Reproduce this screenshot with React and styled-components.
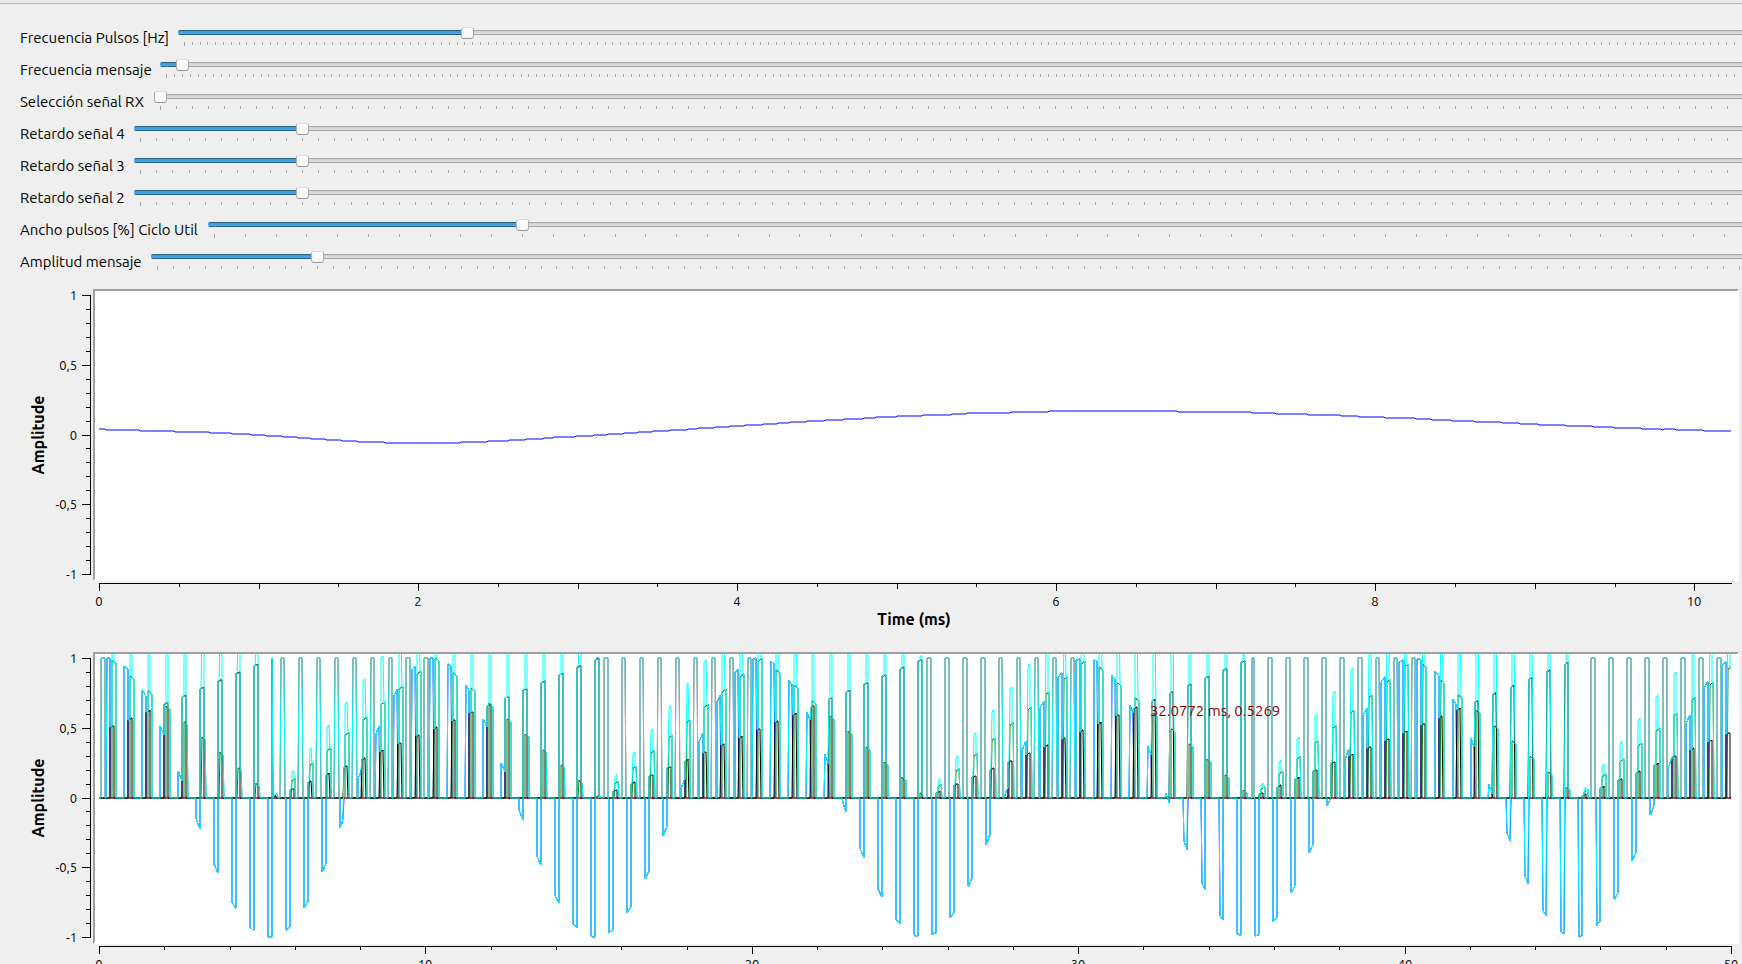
import React, { useLayoutEffect, useMemo, useRef, useState } from "react";
import styled, { createGlobalStyle } from "styled-components";

const GlobalStyle = createGlobalStyle`
  * { box-sizing: border-box; }
  html, body { margin: 0; height: 100%; overflow: hidden; background: #efefef; }
  body { font-family: Ubuntu, "Noto Sans", sans-serif; font-size: 15px; color: #000; }
`;

const Window = styled.main`
  height: 100vh;
  overflow: hidden;
  background: #efefef;
`;

const TopEdge = styled.div`
  height: 4px;
  background: #eaeaea;
  border-bottom: 1px solid #b8b8b8;
`;

const Controls = styled.form`
  margin: 18px -4px 0 20px;
`;

const ControlRow = styled.div`
  display: flex;
  gap: 8px;
  height: 32px;
`;

const ControlLabel = styled.label`
  flex: 0 0 ${(p) => p.$width}px;
  line-height: 32px;
  white-space: nowrap;
`;

const SliderBox = styled.div`
  flex: 1;
  min-width: 0;
  padding-top: 4px;
`;

const Slider = styled.input`
  display: block;
  appearance: none;
  width: 100%;
  height: 13px;
  margin: 0;
  background: transparent;
  outline: none;

  &::-webkit-slider-runnable-track {
    height: 5px;
    border-radius: 2px;
    background:
      linear-gradient(#25618a 0 1px, #3a97dc 1px, #4badec 4px, #25618a 4px) 0 0 / var(--fill) 100% no-repeat,
      linear-gradient(#a9a9a9 0 1px, #cfcfcf 1px, #dedede 4px, #a9a9a9 4px);
  }

  &::-webkit-slider-thumb {
    appearance: none;
    width: 13px;
    height: 12px;
    margin-top: -3px;
    border: 1px solid #b0b0b0;
    border-top-color: #dcdcdc;
    border-bottom-color: #989898;
    border-radius: 3px;
    background: linear-gradient(#ffffff, #f6f6f6);
  }
`;

const TickStrip = styled.svg`
  display: block;
  width: 100%;
  height: 4px;
  margin-top: 3px;
`;

const ChartSection = styled.section`
  display: grid;
  grid-template-columns: 93px minmax(0, 1fr);
  grid-template-rows: 292px 28px 18px;
  margin: 0 3px 25px 0;
`;

const Charts = styled.div`
  padding-top: 11px;
`;

const SideAxis = styled.svg`
  width: 93px;
  height: 292px;
`;

const Canvas = styled.div`
  position: relative;
  background: #fff;
  border: 2px solid #fff;
  border-top-color: #a0a0a0;
  border-left-color: #a0a0a0;
`;

const Trace = styled.svg`
  display: block;
  width: 100%;
  height: 288px;
`;

const BottomAxis = styled.svg`
  grid-column: 2;
  width: 100%;
  height: 28px;
  padding-left: 2px;
  overflow: visible;
`;

const AxisTitle = styled.div`
  grid-column: 2;
  padding-right: 4px;
  text-align: center;
  font-size: 16px;
  font-weight: 700;
  line-height: 20px;
`;

const Readout = styled.output`
  position: absolute;
  left: 64%;
  top: 47px;
  padding-left: 4px;
  font-size: 15px;
  line-height: 20px;
  white-space: nowrap;
  color: #8b0000;
`;

function useWidth() {
  const ref = useRef(null);
  const [width, setWidth] = useState(0);
  useLayoutEffect(() => {
    const measure = () => setWidth(Math.round(ref.current.getBoundingClientRect().width));
    measure();
    const observer = new ResizeObserver(measure);
    observer.observe(ref.current);
    return () => observer.disconnect();
  }, []);
  return [ref, width];
}

/* ---------- sliders ---------- */

const THUMB = 13;

const SLIDERS = [
  { id: "fp", label: "Frecuencia Pulsos [Hz]", width: 150, value: 0.182, ticks: 199.67 },
  { id: "fm", label: "Frecuencia mensaje", width: 132, value: 0.0102, ticks: 199.67 },
  { id: "rx", label: "Selección señal RX", width: 126, value: 0, ticks: 98.75 },
  { id: "r4", label: "Retardo señal 4", width: 106, value: 0.1014, ticks: 98.75 },
  { id: "r3", label: "Retardo señal 3", width: 106, value: 0.1014, ticks: 98.75 },
  { id: "r2", label: "Retardo señal 2", width: 106, value: 0.1014, ticks: 98.75 },
  { id: "an", label: "Ancho pulsos [%] Ciclo Util", width: 180, value: 0.2018, ticks: 49.5 },
  { id: "am", label: "Amplitud mensaje", width: 123, value: 0.1012, ticks: 99 },
];

function SliderControl({ id, label, width, value, ticks }) {
  const [current, setCurrent] = useState(value);
  const [ref, boxWidth] = useWidth();
  const travel = Math.max(0, boxWidth - THUMB);
  const marks = [];
  for (let k = 0; k <= ticks; k += 1) {
    const x = 6 + Math.round((k * travel) / ticks);
    marks.push(`M${x} 0h1v${k === 0 || k === ticks ? 4 : 3}h-1z`);
  }
  return (
    <ControlRow>
      <ControlLabel htmlFor={id} $width={width}>{label}</ControlLabel>
      <SliderBox ref={ref}>
        <Slider
          id={id}
          type="range"
          min="0"
          max="1"
          step="any"
          value={current}
          onChange={(e) => setCurrent(Number(e.target.value))}
          style={{ "--fill": `${current * travel}px` }}
        />
        <TickStrip aria-hidden="true">
          <path d={marks.join("")} fill="#a6a6a6" />
        </TickStrip>
      </SliderBox>
    </ControlRow>
  );
}

/* ---------- plot geometry ---------- */

const PAD_LEFT = 4;
const PAD_RIGHT = 6;
const yOf = (v) => Math.round(143.5 - 139.5 * v);

function VerticalAxis() {
  const ticks = [];
  for (let k = -10; k <= 10; k += 1) {
    const major = k % 5 === 0;
    ticks.push(`M${major ? 82 : 86} ${Math.round(145.5 - 13.95 * k)}h${major ? 9 : 5}v1h-${major ? 9 : 5}z`);
  }
  return (
    <SideAxis>
      <path d={`${ticks.join("")}M90 6h1v280h-1z`} fill="#000" />
      {["1", "0,5", "0", "-0,5", "-1"].map((text, i) => (
        <text key={text} x="77" y={11 + Math.round(i * 69.75)} textAnchor="end" fontSize="13">{text}</text>
      ))}
      <text transform="translate(44 146) rotate(-90)" textAnchor="middle" fontSize="16" fontWeight="700">Amplitude</text>
    </SideAxis>
  );
}

function HorizontalAxis({ width, max, tick, medium, major }) {
  const span = width - PAD_LEFT - PAD_RIGHT;
  const marks = [];
  const labels = [];
  for (let k = 0; k * tick <= max; k += 1) {
    const v = k * tick;
    const x = PAD_LEFT + Math.round((v / max) * span);
    const isMajor = v % major === 0;
    const len = isMajor ? 8 : v % medium === 0 ? 6 : 4;
    marks.push(`M${x} 2h1v${len}h-1z`);
    if (isMajor) labels.push(<text key={v} x={x} y="25" textAnchor="middle" fontSize="13">{v}</text>);
  }
  return (
    <BottomAxis>
      <path d={`M${PAD_LEFT} 2h${Math.max(0, span) + 1}v1h-${Math.max(0, span) + 1}z${marks.join("")}`} fill="#000" />
      {labels}
    </BottomAxis>
  );
}

function toPath(points) {
  let d = "";
  let last = "";
  for (const [x, y] of points) {
    const p = `${x} ${y}`;
    if (p !== last) d += (d ? "L" : "M") + p;
    last = p;
  }
  return d;
}

/* ---------- recovered message: level changes of one quantisation step ---------- */

const START_LEVEL = 6;
const FALLING_A = [6, 40, 75, 110, 132, 151, 166, 183, 198, 211, 226, 242, 258, 285];
const RISING = [
  361, 388, 409, 426, 444, 454, 476, 494, 508, 524, 538, 553, 570, 588, 598, 615, 630,
  645, 663, 678, 690, 707, 725, 744, 764, 776, 797, 823, 852, 867, 911, 949,
];
const FALLING_B = [
  1078, 1152, 1176, 1208, 1241, 1259, 1285, 1316, 1332, 1352, 1375, 1402, 1420, 1439,
  1466, 1493, 1514, 1542, 1576, 1604,
];
const SLOW_SPAN = 1632;

function slowTrace(width) {
  const scale = (width - PAD_LEFT - PAD_RIGHT) / SLOW_SPAN;
  const changes = [
    ...FALLING_A.map((t) => [t, -1]),
    ...RISING.map((t) => [t, 1]),
    ...FALLING_B.map((t) => [t, -1]),
    [1562, -1],
    [1564, 1],
  ].sort((a, b) => a[0] - b[0]);
  let level = START_LEVEL;
  const points = [[PAD_LEFT, 144 - level]];
  for (const [t, step] of changes) {
    const x = PAD_LEFT + Math.round(t * scale);
    points.push([x, 144 - level]);
    level += step;
    points.push([x + 1, 144 - level]);
  }
  points.push([width - PAD_RIGHT, 144 - level]);
  return [{ color: "#0000ff", d: toPath(points) }];
}

/* ---------- time division multiplex of four sampled messages ---------- */

const SAMPLES = 5000;
const FRAME = 55;
const SLOT = 12;
const phase = (i) => (((i - 532) % 1000) + 1000) % 1000 / 1000;
const inSlot = (i, start) => (((i - start) % FRAME) + FRAME) % FRAME < SLOT;

const CHANNELS = [
  { color: "#0000ff", start: 23, message: (i) => Math.cos((2 * Math.PI * (i - 23)) / 1000) },
  { color: "#ff0000", start: 7, message: (i) => (phase(i) < 0.5 ? 1 : 0) },
  { color: "#008000", start: 40, message: (i) => 1 - Math.abs(1 - 2 * phase(i)) },
  { color: "#000000", start: 35, message: (i) => phase(i) },
];

function multiplexTraces(width) {
  const span = width - PAD_LEFT - PAD_RIGHT;
  const lines = CHANNELS.map(() => []);
  const sum = [];
  for (let i = 0; i <= SAMPLES; i += 1) {
    const x = PAD_LEFT + Math.round((i / SAMPLES) * span);
    let total = 0;
    CHANNELS.forEach((c, n) => {
      const v = inSlot(i, c.start) ? c.message(i) : 0;
      total += v;
      lines[n].push([x, yOf(v)]);
    });
    sum.push([x, yOf(total)]);
  }
  return [
    ...CHANNELS.map((c, n) => ({ color: c.color, d: toPath(lines[n]) })),
    { color: "#00ffff", d: toPath(sum) },
  ];
}

function Chart({ traces, axis, readout }) {
  const [ref, width] = useWidth();
  const inner = width - 4;
  const paths = useMemo(() => (inner > 20 ? traces(inner) : []), [inner, traces]);
  return (
    <ChartSection>
      <VerticalAxis />
      <Canvas ref={ref}>
        <Trace>
          {paths.map((p) => (
            <path key={p.color} d={p.d} fill="none" stroke={p.color} strokeWidth="1" strokeLinejoin="bevel" />
          ))}
        </Trace>
        {readout && <Readout>{readout}</Readout>}
      </Canvas>
      {inner > 20 && <HorizontalAxis width={inner} {...axis} />}
      <AxisTitle>Time (ms)</AxisTitle>
    </ChartSection>
  );
}

const SLOW_AXIS = { max: 10.23, tick: 0.5, medium: 1, major: 2 };
const FAST_AXIS = { max: 50, tick: 2, medium: 100, major: 10 };

export default function App() {
  return (
    <Window>
      <GlobalStyle />
      <TopEdge />
      <Controls>
        {SLIDERS.map((s) => (
          <SliderControl key={s.id} {...s} />
        ))}
      </Controls>
      <Charts>
        <Chart traces={slowTrace} axis={SLOW_AXIS} />
        <Chart traces={multiplexTraces} axis={FAST_AXIS} readout="32.0772 ms, 0.5269" />
      </Charts>
    </Window>
  );
}
